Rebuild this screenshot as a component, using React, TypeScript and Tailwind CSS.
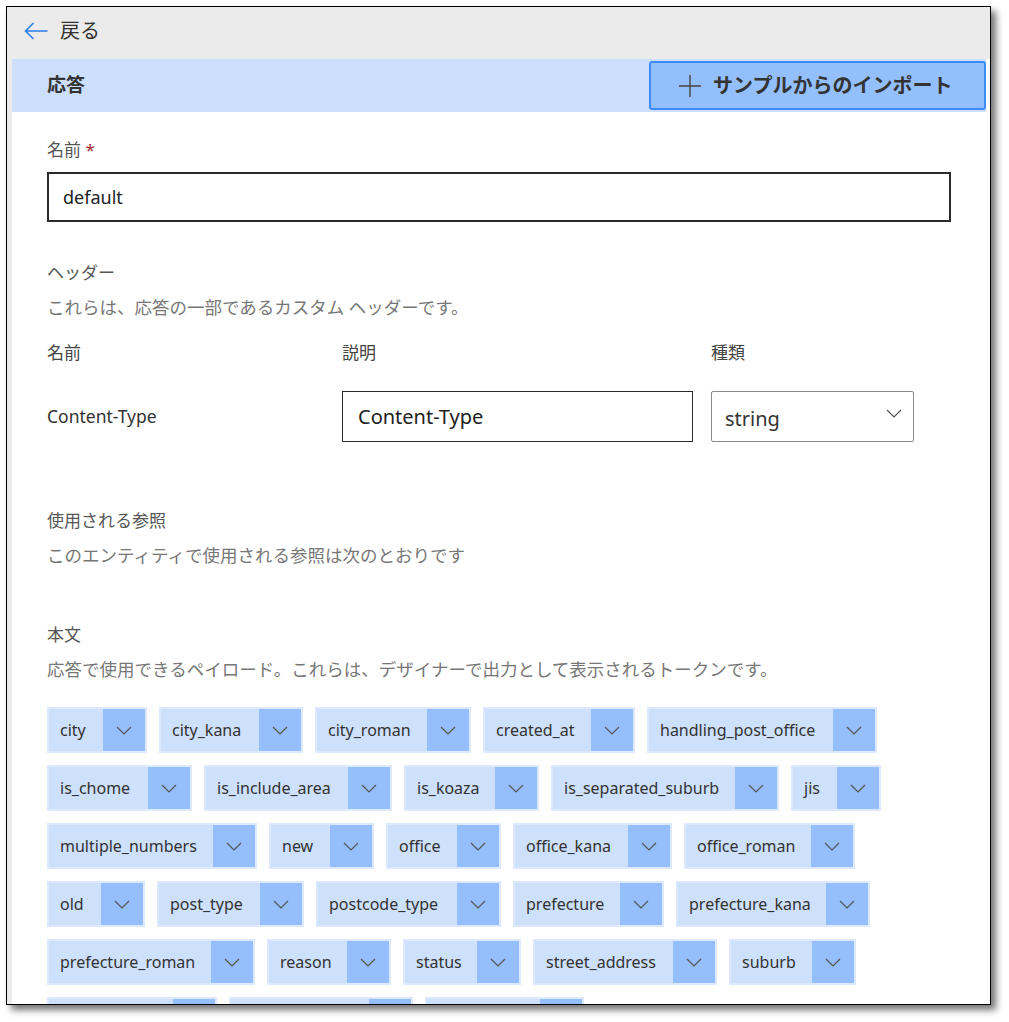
import React from 'react'

const tags = [
  { name: 'city', w: 'w-[100px]' },
  { name: 'city_kana', w: 'w-[144px]' },
  { name: 'city_roman', w: 'w-[156px]' },
  { name: 'created_at', w: 'w-[152px]' },
  { name: 'handling_post_office', w: 'w-[230px]' },
  { name: 'is_chome', w: 'w-[145px]' },
  { name: 'is_include_area', w: 'w-[188px]' },
  { name: 'is_koaza', w: 'w-[135px]' },
  { name: 'is_separated_suburb', w: 'w-[228px]' },
  { name: 'jis', w: 'w-[90px]' },
  { name: 'multiple_numbers', w: 'w-[210px]' },
  { name: 'new', w: 'w-[105px]' },
  { name: 'office', w: 'w-[115px]' },
  { name: 'office_kana', w: 'w-[159px]' },
  { name: 'office_roman', w: 'w-[171px]' },
  { name: 'old', w: 'w-[98px]' },
  { name: 'post_type', w: 'w-[147px]' },
  { name: 'postcode_type', w: 'w-[185px]' },
  { name: 'prefecture', w: 'w-[151px]' },
  { name: 'prefecture_kana', w: 'w-[194px]' },
  { name: 'prefecture_roman', w: 'w-[208px]' },
  { name: 'reason', w: 'w-[124px]' },
  { name: 'status', w: 'w-[118px]' },
  { name: 'street_address', w: 'w-[184px]' },
  { name: 'suburb', w: 'w-[127px]' },
  { name: 'suburb_kana', w: 'w-[170px]' },
  { name: 'suburb_roman', w: 'w-[184px]' },
  { name: 'updated_at', w: 'w-[159px]' },
]

const Chevron = ({ className = '' }: { className?: string }) => (
  <svg width="16" height="9" viewBox="0 0 16 9" className={className}>
    <path d="M1 1 L8 8 L15 1" fill="none" stroke="#555" strokeWidth="1.2" />
  </svg>
)

const Tag = ({ name, w }: { name: string; w: string }) => (
  <div className={`flex h-[46px] border-2 border-[#dce9fe] bg-[#cde0fc] ${w}`}>
    <span className="flex-1 pl-[11px] text-[16px] leading-[42px] text-[#333] whitespace-nowrap overflow-hidden">
      {name}
    </span>
    <span className="flex w-[42px] items-center justify-center bg-[#94bffc]">
      <Chevron />
    </span>
  </div>
)

const App = () => {
  return (
    <div
      className="h-[1022px] w-[1009px] overflow-hidden bg-white pl-[6px] pt-[6px]"
      style={{ fontFamily: '"Noto Sans", "Noto Sans CJK JP", sans-serif' }}
    >
      <div className="flex h-[999px] w-[985px] flex-col overflow-hidden border-[1.5px] border-black bg-[#ebebeb] shadow-[5px_5px_7px_rgba(0,0,0,0.55)]">
        {/* top bar */}
        <div className="flex h-[52px] shrink-0 items-center gap-[12px] pb-[5px] pl-[17px]">
          <svg width="24" height="18" viewBox="0 0 24 18">
            <path
              d="M9.5 1 L1.5 9 L9.5 17 M1.5 9 H23.5"
              fill="none"
              stroke="#2b7de9"
              strokeWidth="1.6"
            />
          </svg>
          <span className="text-[20px] leading-none text-[#333]">戻る</span>
        </div>

        <div className="flex flex-1 overflow-hidden pl-[5px]">
          <div className="flex-1 overflow-hidden bg-white pr-[4px]">
            {/* section band */}
            <div className="flex h-[53px] items-center justify-between bg-[#cce0fd] pl-[35px]">
              <h1 className="text-[19px] font-bold text-[#333]">応答</h1>
              <button className="flex h-[49px] w-[337px] items-center gap-[12px] rounded-[3px] border-2 border-[#3d8bf5] bg-[#94bffd] pl-[28px] text-[20px] font-bold text-[#333]">
                <svg width="22" height="22" viewBox="0 0 22 22">
                  <path d="M11 0 V22 M0 11 H22" stroke="#444" strokeWidth="1.4" />
                </svg>
                サンプルからのインポート
              </button>
            </div>

            <div className="px-[35px]">
              {/* name */}
              <div className="mt-[26px] text-[17px] leading-[24px] text-[#555]">
                名前 <span className="text-[#a4262c]">*</span>
              </div>
              <div className="mt-[10px] flex h-[50px] items-center border-2 border-[#2b2b2b] pl-[14px] text-[18px] text-[#222]">
                default
              </div>

              {/* headers */}
              <div className="mt-[39px] text-[17px] leading-[24px] text-[#555]">ヘッダー</div>
              <div className="mt-[10px] text-[17.5px] leading-[24px] text-[#777]">
                これらは、応答の一部であるカスタム ヘッダーです。
              </div>
              <div className="mt-[22px] grid grid-cols-[295px_369px_203px] text-[17px] leading-[24px] text-[#444]">
                <span>名前</span>
                <span>説明</span>
                <span>種類</span>
              </div>
              <div className="mt-[26px] grid grid-cols-[295px_369px_203px] items-center">
                <span className="text-[17.5px] text-[#333]">Content-Type</span>
                <div className="flex h-[51px] w-[351px] items-center border-[1.5px] border-[#2b2b2b] pl-[15px] text-[20px] text-[#222]">
                  Content-Type
                </div>
                <div className="flex h-[51px] w-[203px] items-start justify-between rounded-[2px] border border-[#8a8a8a] pl-[13px] pr-[11px]">
                  <span className="pt-[12px] text-[20px] leading-[30px] text-[#333]">string</span>
                  <Chevron className="mt-[17px]" />
                </div>
              </div>

              {/* references */}
              <div className="mt-[67px] text-[17px] leading-[24px] text-[#555]">使用される参照</div>
              <div className="mt-[10px] text-[17.5px] leading-[24px] text-[#777]">
                このエンティティで使用される参照は次のとおりです
              </div>

              {/* body */}
              <div className="mt-[56px] text-[17px] leading-[24px] text-[#555]">本文</div>
              <div className="mt-[10px] text-[17.5px] leading-[24px] text-[#777]">
                応答で使用できるペイロード。これらは、デザイナーで出力として表示されるトークンです。
              </div>

              <div className="mt-[26px] flex flex-wrap gap-x-3 gap-y-3">
                {tags.map((t) => (
                  <Tag key={t.name} name={t.name} w={t.w} />
                ))}
              </div>
            </div>
          </div>
        </div>
      </div>
    </div>
  )
}

export default App
